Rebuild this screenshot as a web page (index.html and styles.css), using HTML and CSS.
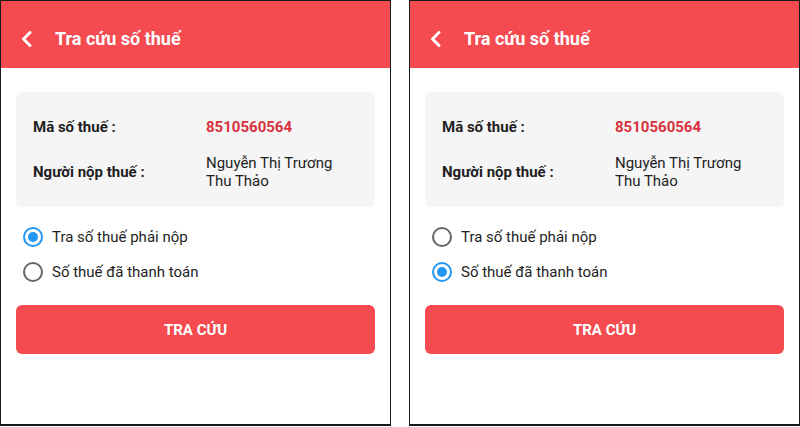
FILE: index.html
```html
<!DOCTYPE html>
<html lang="vi">
<head>
    <meta charset="UTF-8">
    <meta name="viewport" content="width=device-width, initial-scale=1.0">
    <title>Tra cứu số thuế</title>
    <link rel="stylesheet" href="styles.css">
</head>
<body>
    <div class="screens">
        <div class="phone">
            <div class="appbar">
                <svg class="back" width="14" height="16" viewBox="0 0 14 16">
                    <path d="M11 1.5 L4.5 8 L11 14.5" fill="none" stroke="#fff" stroke-width="3" stroke-linecap="round" stroke-linejoin="round"/>
                </svg>
                <div class="title">Tra cứu số thuế</div>
            </div>
            <div class="content">
                <div class="info-card">
                    <div class="label">Mã số thuế :</div>
                    <div class="value tax-code">8510560564</div>
                    <div class="label">Người nộp thuế :</div>
                    <div class="value">Nguyễn Thị Trương Thu Thảo</div>
                </div>
                <div class="options">
                    <div class="option"><span class="radio checked"></span>Tra số thuế phải nộp</div>
                    <div class="option"><span class="radio"></span>Số thuế đã thanh toán</div>
                </div>
                <button class="btn">TRA CỨU</button>
            </div>
        </div>

        <div class="phone">
            <div class="appbar">
                <svg class="back" width="14" height="16" viewBox="0 0 14 16">
                    <path d="M11 1.5 L4.5 8 L11 14.5" fill="none" stroke="#fff" stroke-width="3" stroke-linecap="round" stroke-linejoin="round"/>
                </svg>
                <div class="title">Tra cứu số thuế</div>
            </div>
            <div class="content">
                <div class="info-card">
                    <div class="label">Mã số thuế :</div>
                    <div class="value tax-code">8510560564</div>
                    <div class="label">Người nộp thuế :</div>
                    <div class="value">Nguyễn Thị Trương Thu Thảo</div>
                </div>
                <div class="options">
                    <div class="option"><span class="radio"></span>Tra số thuế phải nộp</div>
                    <div class="option"><span class="radio checked"></span>Số thuế đã thanh toán</div>
                </div>
                <button class="btn">TRA CỨU</button>
            </div>
        </div>
    </div>
</body>
</html>
```

FILE: styles.css
```css
body {
    margin: 0;
    background: #fff;
    font-family: Roboto, "Noto Sans", sans-serif;
    color: #1e1e1e;
}
.screens {
    display: flex;
    justify-content: space-between;
    width: 800px;
    height: 427px;
}
.phone {
    width: 391px;
    height: 426px;
    box-sizing: border-box;
    border: 1px solid #1a1a1a;
    border-bottom-width: 2px;
    background: #fff;
}
.appbar {
    height: 67px;
    box-sizing: border-box;
    padding: 8px 0 0 18px;
    background: #f44a50;
    color: #fff;
    display: flex;
    align-items: center;
}
.back {
    display: block;
    margin-right: 22px;
}
.title {
    font-size: 18px;
    font-weight: bold;
}
.content {
    padding: 24px 15px 0;
}
.info-card {
    background: #f5f5f5;
    border-radius: 6px;
    padding: 26px 16px 17px 17px;
    display: grid;
    grid-template-columns: 173px 1fr;
    align-items: center;
    row-gap: 18px;
    font-size: 15px;
    line-height: 18px;
}
.label {
    font-weight: bold;
}
.tax-code {
    color: #d8323e;
    font-weight: bold;
}
.options {
    margin: 12px 0 16px;
}
.option {
    display: flex;
    align-items: center;
    height: 35px;
    padding-left: 7px;
    font-size: 15px;
}
.radio {
    width: 16px;
    height: 16px;
    border: 2px solid #666;
    border-radius: 50%;
    margin-right: 9px;
    position: relative;
}
.radio.checked {
    border-color: #2196f3;
}
.radio.checked::after {
    content: "";
    position: absolute;
    left: 3px;
    top: 3px;
    width: 10px;
    height: 10px;
    border-radius: 50%;
    background: #2196f3;
}
.btn {
    display: block;
    width: 100%;
    height: 49px;
    border: none;
    border-radius: 6px;
    background: #f44a50;
    color: #fff;
    font-family: inherit;
    font-size: 15px;
    font-weight: bold;
}
```
